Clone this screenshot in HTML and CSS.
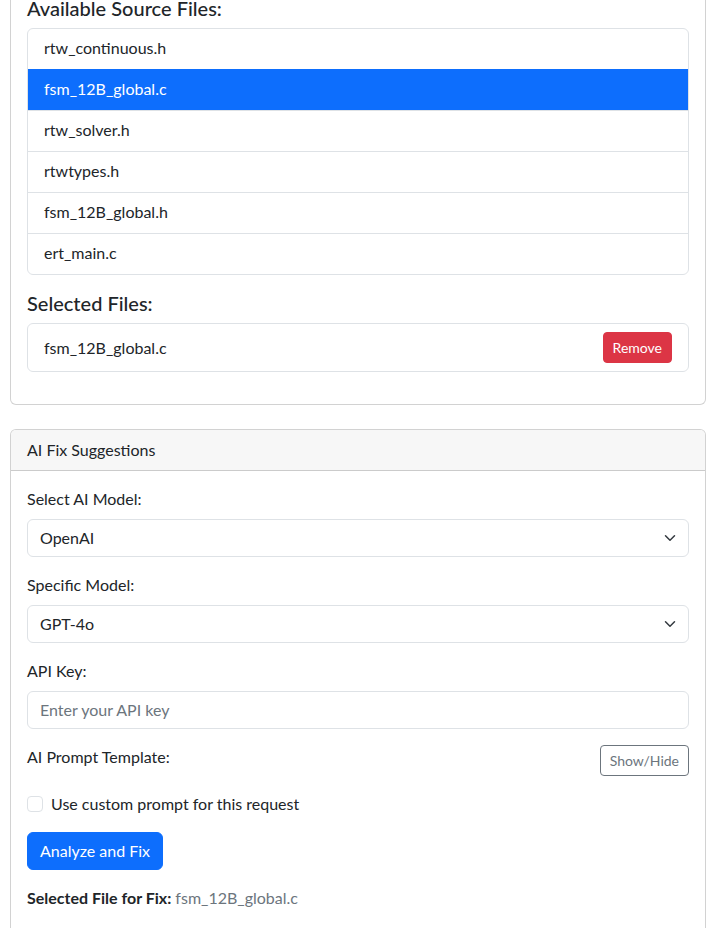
FILE: index.html
```html
<!DOCTYPE html>
<html>
<head>
<meta charset="utf-8">
<link rel="stylesheet" href="styles.css">
</head>
<body>
<div class="page">
  <div class="card">
    <div class="card-body">
      <h5 class="title">Available Source Files:</h5>
      <ul class="list-group">
        <li class="list-item">rtw_continuous.h</li>
        <li class="list-item active">fsm_12B_global.c</li>
        <li class="list-item">rtw_solver.h</li>
        <li class="list-item">rtwtypes.h</li>
        <li class="list-item">fsm_12B_global.h</li>
        <li class="list-item">ert_main.c</li>
      </ul>
      <h5 class="title title-gap">Selected Files:</h5>
      <ul class="list-group mb-3">
        <li class="list-item row-item">
          <span>fsm_12B_global.c</span>
          <button class="btn btn-sm btn-danger">Remove</button>
        </li>
      </ul>
    </div>
  </div>

  <div class="card card-2">
    <div class="card-header">AI Fix Suggestions</div>
    <div class="card-body">
      <div class="field">
        <label class="label">Select AI Model:</label>
        <div class="select"><span>OpenAI</span>
          <svg class="chev" width="12" height="12" viewBox="0 0 16 16"><path fill="none" stroke="#343a40" stroke-linecap="round" stroke-linejoin="round" stroke-width="2" d="m2 5 6 6 6-6"/></svg>
        </div>
      </div>
      <div class="field">
        <label class="label">Specific Model:</label>
        <div class="select"><span>GPT-4o</span>
          <svg class="chev" width="12" height="12" viewBox="0 0 16 16"><path fill="none" stroke="#343a40" stroke-linecap="round" stroke-linejoin="round" stroke-width="2" d="m2 5 6 6 6-6"/></svg>
        </div>
      </div>
      <div class="field">
        <label class="label">API Key:</label>
        <div class="input placeholder">Enter your API key</div>
      </div>
      <div class="field row-between">
        <label class="label nomb">AI Prompt Template:</label>
        <button class="btn btn-sm btn-outline">Show/Hide</button>
      </div>
      <div class="field check-row">
        <span class="checkbox"></span>
        <span>Use custom prompt for this request</span>
      </div>
      <div class="field">
        <button class="btn btn-primary">Analyze and Fix</button>
      </div>
      <div class="sel-file"><strong>Selected File for Fix:</strong> <span class="muted">fsm_12B_global.c</span></div>
    </div>
  </div>
</div>
</body>
</html>
```

FILE: styles.css
```css
* { box-sizing: border-box; }
html, body { margin: 0; padding: 0; background: #fff; }
body {
  font-family: "Lato", "Noto Sans", sans-serif;
  font-size: 16px;
  line-height: 24px;
  color: #212529;
}
.page {
  width: 696px;
  margin-left: 10px;
  margin-top: -21px;
}
.card {
  border: 1px solid rgba(0,0,0,.175);
  border-radius: 6px;
  background: #fff;
  overflow: hidden;
}
.card-2 { margin-top: 24px; }
.card-body { padding: 16px; }
.card-header {
  background: #f7f7f7;
  border-bottom: 1px solid rgba(0,0,0,.175);
  padding: 8px 16px;
  line-height: 24px;
}
.title {
  margin: 0 0 8px;
  font-size: 20px;
  font-weight: 500;
  line-height: 24px;
}
.title-gap { margin-top: 16px; }
.list-group {
  list-style: none;
  margin: 0;
  padding: 0;
  border: 1px solid #dee2e6;
  border-radius: 6px;
  overflow: hidden;
}
.mb-3 { margin-bottom: 16px; }
.list-item {
  padding: 7px 16px 9px;
  border-top: 1px solid #dee2e6;
  line-height: 24px;
}
.list-item:first-child { border-top: 0; }
.list-item.active {
  background: #0d6efd;
  color: #fff;
  border-color: #0d6efd;
}
.row-item {
  display: flex;
  justify-content: space-between;
  align-items: center;
  padding: 8px 16px;
}
.btn {
  font-family: inherit;
  font-size: 16px;
  line-height: 24px;
  padding: 6px 12px;
  border: 1px solid transparent;
  border-radius: 6px;
  cursor: pointer;
}
.btn-sm {
  font-size: 14px;
  line-height: 21px;
  padding: 4px 9px;
  border-radius: 4px;
}
.btn-danger { background: #dc3545; border-color: #dc3545; color: #fff; }
.btn-primary { background: #0d6efd; border-color: #0d6efd; color: #fff; }
.btn-outline { background: #fff; border-color: #6c757d; color: #6c757d; }
.field { margin-bottom: 16px; }
.label { display: block; margin-bottom: 8px; }
.label.nomb { margin-bottom: 0; }
.select, .input {
  height: 38px;
  border: 1px solid #dee2e6;
  border-radius: 6px;
  padding: 6px 12px;
  display: flex;
  align-items: center;
  justify-content: space-between;
}
.placeholder { color: #6c757d; }
.row-between {
  display: flex;
  justify-content: space-between;
  align-items: flex-start;
}
.check-row {
  display: flex;
  align-items: center;
  gap: 8px;
}
.checkbox {
  width: 16px;
  height: 16px;
  border: 1px solid #dee2e6;
  border-radius: 4px;
  display: inline-block;
}
.sel-file { line-height: 24px; margin-bottom: 24px; }
.sel-file strong { font-weight: 700; }
.muted { color: #6c757d; }
```
